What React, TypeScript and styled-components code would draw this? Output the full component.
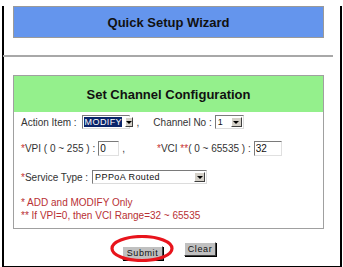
import React from "react";
import styled, { createGlobalStyle } from "styled-components";

const GlobalStyle = createGlobalStyle`
  body {
    margin: 0;
    background: #fff;
    font-family: "Liberation Sans", Arial, sans-serif;
  }
`;

const Frame = styled.div`
  box-sizing: border-box;
  width: 340px;
  height: 262px;
  margin-left: 2px;
  border: 2px solid #000;
  border-top: none;
`;

const TitleBar = styled.div`
  box-sizing: border-box;
  width: 311px;
  height: 32px;
  margin: 6px 0 0 9px;
  background: #6495ed;
  border: 1px solid #9a9a9a;
  display: flex;
  align-items: center;
  justify-content: center;
  font-size: 13px;
  font-weight: bold;
  color: #111;
`;

const Divider = styled.div`
  width: 330px;
  height: 2px;
  margin: 17px 0 0 -1px;
  background: #a8a8a8;
`;

const Panel = styled.div`
  box-sizing: border-box;
  width: 311px;
  height: 154px;
  margin: 18px 0 0 9px;
  border: 1px solid #a0a0a0;
`;

const PanelHeader = styled.div`
  height: 36px;
  background: #94f08c;
  display: flex;
  align-items: center;
  justify-content: center;
  font-size: 13px;
  font-weight: bold;
  color: #111;
`;

const PanelBody = styled.div`
  padding: 2px 0 0 7px;
`;

const Row = styled.div<{ $mt?: number }>`
  display: flex;
  align-items: center;
  height: 16px;
  margin-top: ${(p) => p.$mt ?? 0}px;
`;

const Label = styled.span<{ $ml?: number }>`
  font-size: 10px;
  color: #333;
  white-space: pre;
  margin-left: ${(p) => p.$ml ?? 0}px;
`;

const Star = styled.span`
  color: #c83232;
`;

const SelectBox = styled.div<{ $w: number; $ml?: number }>`
  box-sizing: border-box;
  display: inline-flex;
  align-items: stretch;
  width: ${(p) => p.$w}px;
  height: 14px;
  margin-left: ${(p) => p.$ml ?? 0}px;
  padding: 1px;
  background: #fff;
  border: 1px solid;
  border-color: #7a7a7a #dcdcdc #dcdcdc #7a7a7a;
`;

const SelectValue = styled.span<{ $active?: boolean }>`
  flex: 1;
  display: flex;
  align-items: center;
  padding-left: 1px;
  margin-right: 3px;
  font-size: 9px;
  letter-spacing: 0.4px;
  color: ${(p) => (p.$active ? "#fff" : "#111")};
  background: ${(p) => (p.$active ? "#0a246a" : "transparent")};
`;

const ArrowButton = styled.span`
  box-sizing: border-box;
  width: 11px;
  display: flex;
  align-items: center;
  justify-content: center;
  background: #d4d0c8;
  border: 1px solid;
  border-color: #fff #404040 #404040 #fff;

  &::after {
    content: "";
    border-left: 3px solid transparent;
    border-right: 3px solid transparent;
    border-top: 3px solid #000;
  }
`;

const TextInput = styled.input<{ $w: number; $ml?: number }>`
  box-sizing: border-box;
  width: ${(p) => p.$w}px;
  height: 15px;
  margin: 0 0 0 ${(p) => p.$ml ?? 0}px;
  padding: 0 1px;
  border: 1px solid;
  border-color: #7a7a7a #e0e0e0 #e0e0e0 #7a7a7a;
  font-family: "Liberation Sans", Arial, sans-serif;
  font-size: 10px;
  color: #111;
  outline: none;
`;

const Notes = styled.div`
  margin-top: 11px;
  font-size: 10px;
  line-height: 13px;
  color: #b83034;
`;

const ButtonRow = styled.div`
  display: flex;
  justify-content: center;
  gap: 21px;
  margin-top: 13px;
  padding-right: 6px;
`;

const ButtonWrap = styled.div`
  position: relative;
`;

const Button = styled.button<{ $w: number }>`
  box-sizing: border-box;
  width: ${(p) => p.$w}px;
  height: 14px;
  padding: 0;
  background: #c0c0c0;
  border: 1px solid;
  border-color: #fff #404040 #404040 #fff;
  box-shadow: 1px 1px 0 #000;
  font-family: "Liberation Sans", Arial, sans-serif;
  font-size: 9px;
  letter-spacing: 0.6px;
  color: #111;
`;

const Highlight = styled.svg`
  position: absolute;
  left: -12px;
  top: -7px;
  width: 64px;
  height: 27px;
  pointer-events: none;
`;

type SelectProps = { w: number; ml?: number; value: string; active?: boolean };

const FakeSelect = ({ w, ml, value, active }: SelectProps) => (
  <SelectBox $w={w} $ml={ml}>
    <SelectValue $active={active}>{value}</SelectValue>
    <ArrowButton />
  </SelectBox>
);

const App = () => {
  return (
    <Frame>
      <GlobalStyle />
      <TitleBar>Quick Setup Wizard</TitleBar>
      <Divider />
      <Panel>
        <PanelHeader>Set Channel Configuration</PanelHeader>
        <PanelBody>
          <Row>
            <Label>Action Item :</Label>
            <FakeSelect w={48} ml={5} value="MODIFY" active />
            <Label $ml={7}>,</Label>
            <Label $ml={14}>Channel No :</Label>
            <FakeSelect w={29} ml={3} value="1" />
          </Row>
          <Row $mt={10}>
            <Label>
              <Star>*</Star>VPI ( 0 ~ 255 ) :
            </Label>
            <TextInput $w={21} $ml={3} defaultValue="0" />
            <Label $ml={3}>,</Label>
            <Label $ml={32}>
              <Star>*</Star>VCI <Star>**</Star>( 0 ~ 65535 ) :
            </Label>
            <TextInput $w={28} $ml={3} defaultValue="32" />
          </Row>
          <Row $mt={13}>
            <Label>
              <Star>*</Star>Service Type :
            </Label>
            <FakeSelect w={115} ml={4} value="PPPoA Routed" />
          </Row>
          <Notes>
            <div>* ADD and MODIFY Only</div>
            <div>** If VPI=0, then VCI Range=32 ~ 65535</div>
          </Notes>
        </PanelBody>
      </Panel>
      <ButtonRow>
        <ButtonWrap>
          <Button $w={41}>Submit</Button>
          <Highlight viewBox="0 0 64 27">
            <ellipse cx="32" cy="13.5" rx="30" ry="12" fill="none" stroke="#e8141c" strokeWidth="3.2" />
          </Highlight>
        </ButtonWrap>
        <Button $w={32}>Clear</Button>
      </ButtonRow>
    </Frame>
  );
};

export default App;
